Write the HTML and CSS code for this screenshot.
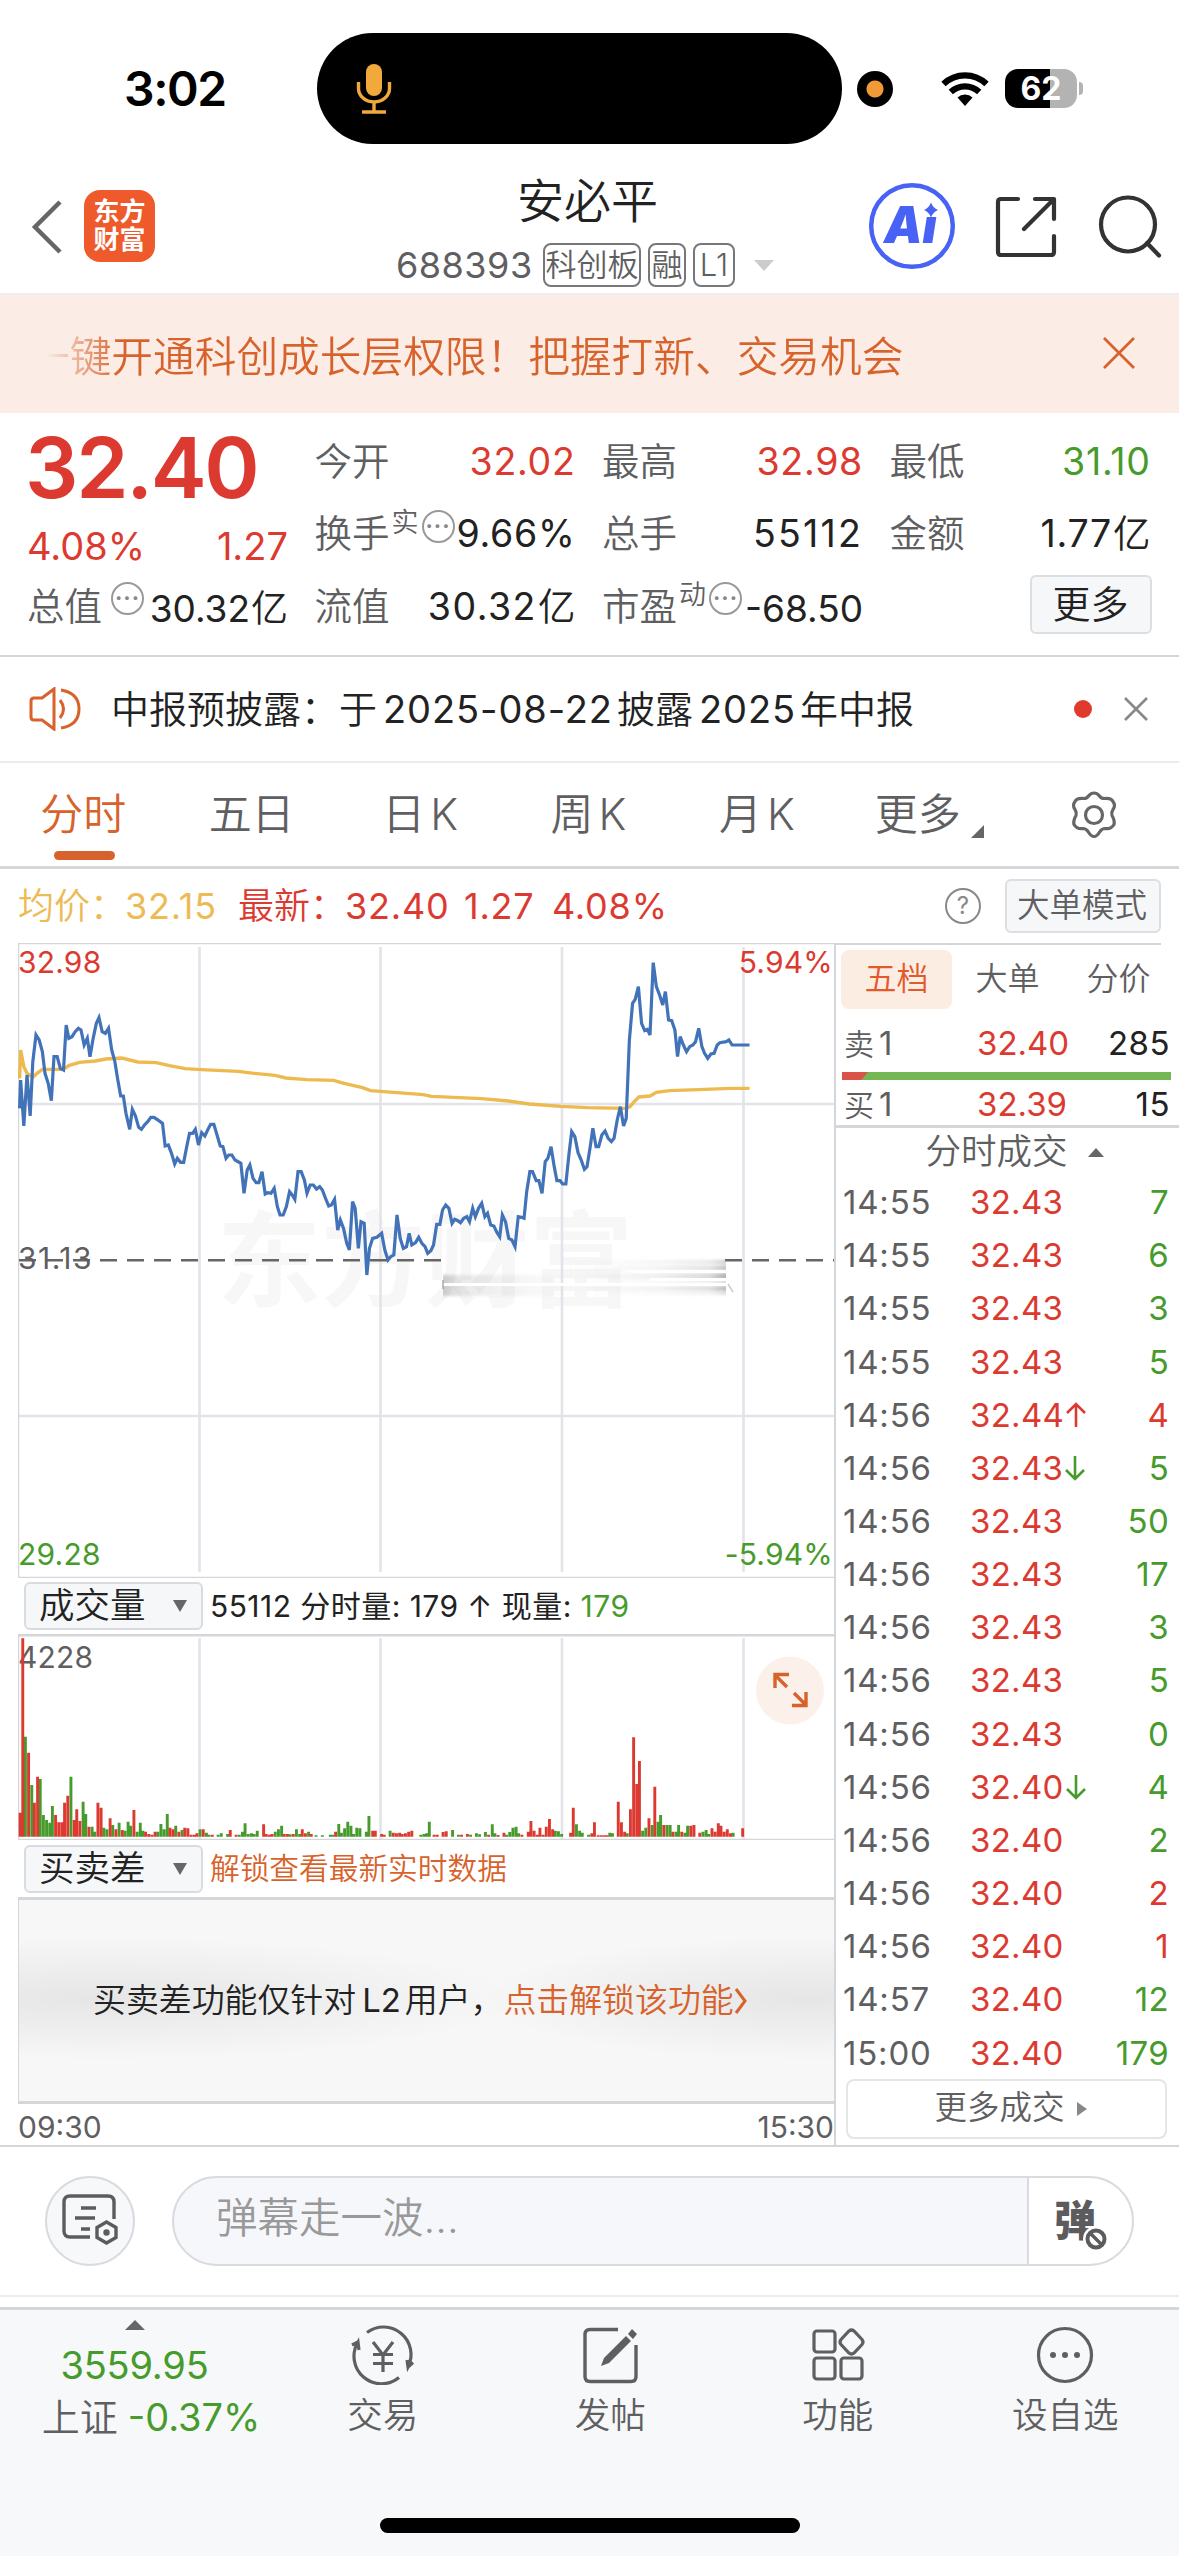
FILE: index.html
```html
<!DOCTYPE html>
<html lang="zh-CN">
<head>
<meta charset="utf-8">
<title>安必平 688393</title>
<link rel="stylesheet" href="styles.css">
</head>
<body>
<div class="status">
  <div class="clock">3:02</div>
  <div class="island">
    <svg width="36" height="52" viewBox="0 0 36 52"><rect x="10" y="1" width="16" height="32" rx="8" fill="#f2a93b"/><path d="M2.500 19v6.500a15.500 13.500 0 0 0 31 0V19M18 39v9M6 49h24" fill="none" stroke="#f2a93b" stroke-width="3.400"/></svg>
  </div>
  <div class="rec"></div>
  <svg class="wifi" width="50" height="36" viewBox="0 0 50 36"><path d="M25 35l-7.500-8.500a11 11 0 0 1 15 0z" fill="#000"/><path d="M3.500 13a31 31 0 0 1 43 0M10.800 21a20.500 20.500 0 0 1 28.400 0" fill="none" stroke="#000" stroke-width="6.200"/></svg>
  <div class="battery">62</div><div class="battery-cap"></div>
</div>

<header class="head">
  <svg class="back" width="32" height="54" viewBox="0 0 32 54"><path d="M29 2L4 27l25 25" fill="none" stroke="#666" stroke-width="4.500"/></svg>
  <div class="logo"><span>东方</span><span>财富</span></div>
  <div class="title">
    <h1>安必平</h1>
    <div class="code-row"><span class="code">688393</span><span class="tag t3">科创板</span><span class="tag t1">融</span><span class="tag tl">L1</span><i class="tri-down light"></i></div>
  </div>
  <svg class="ai" width="88" height="88" viewBox="0 0 88 88"><circle cx="44" cy="44" r="40.800" fill="#fff" stroke="#4762f5" stroke-width="4.500"/><text x="16" y="61" class="ai-text" textLength="53" lengthAdjust="spacingAndGlyphs">Ai</text><path d="M51 18h20v17H51z" fill="#fff"/><path d="M63 20.500q2 5.500 7 7.500-5 2-7 7.500-2-5.500-7-7.500 5-2 7-7.500z" fill="#4762f5"/></svg>
  <svg class="share" width="62" height="62" viewBox="0 0 62 62"><path d="M23 3H6Q3 3 3 6v50q0 3 3 3h50q3 0 3-3V40M40 3h19v20M57 5L29 33" fill="none" stroke="#333" stroke-width="4.200" stroke-linecap="round" stroke-linejoin="round"/></svg>
  <svg class="search" width="64" height="64" viewBox="0 0 64 64"><circle cx="30" cy="29.500" r="27" fill="none" stroke="#333" stroke-width="4.200"/><path d="M49 48l12 12.500" stroke="#333" stroke-width="4.200" stroke-linecap="round"/></svg>
</header>

<div class="banner"><p>一键开通科创成长层权限！把握打新、交易机会</p><svg width="32" height="32" viewBox="0 0 32 32"><path d="M1 1l30 30M31 1L1 31" stroke="#d8622b" stroke-width="2.800"/></svg></div>

<section class="quote">
  <div class="last"><div class="price">32.40</div><div class="chg"><span>4.08%</span><span>1.27</span></div></div>
  <div class="cell"><label>今开</label><b class="up">32.02</b></div>
  <div class="cell"><label>最高</label><b class="up">32.98</b></div>
  <div class="cell"><label>最低</label><b class="down">31.10</b></div>
  <div class="cell"><label>换手</label><sup>实</sup><i class="dots">···</i><b>9.66%</b></div>
  <div class="cell"><label>总手</label><b class="wide-num">55112</b></div>
  <div class="cell"><label>金额</label><b>1.77<u>亿</u></b></div>
  <div class="cell low"><label>总值</label><i class="dots wide">···</i><b>30.32<u>亿</u></b></div>
  <div class="cell"><label>流值</label><b class="roomy">30.32<u>亿</u></b></div>
  <div class="cell low"><label>市盈</label><sup>动</sup><i class="dots">···</i><b>-68.50</b></div>
  <div class="cell"><span class="more">更多</span></div>
</section>

<section class="notice">
  <svg width="54" height="44" viewBox="0 0 54 44"><g fill="none" stroke="#d8622b" stroke-width="3"><path d="M25 2L13 11H5q-3 0-3 3v16q0 3 3 3h8l12 9z"/><path d="M31 13q7 9 0 18"/><path d="M32 3q18 3 18 19T32 41"/></g></svg>
  <p>中报预披露：于<span class="n">2025-08-22</span>披露<span class="n">2025</span>年中报</p>
  <i class="dot"></i>
  <svg width="24" height="24" viewBox="0 0 24 24"><path d="M1 1l22 22M23 1L1 23" stroke="#888" stroke-width="2.600"/></svg>
</section>

<nav class="tabs">
  <span class="on">分时</span><span>五日</span><span>日<em>K</em></span><span>周<em>K</em></span><span>月<em>K</em></span><span class="mt">更多<i class="corner"></i></span>
  <span><svg width="50" height="48" viewBox="0 0 50 48"><g fill="none" stroke="#666" stroke-width="3.200" stroke-linejoin="round"><path d="M25 2q3 0 5 2.500 2 3 5 3 7-1 9 3 3 4 0 8-2 3-1 6 3 5 2 9-3 5-9 4-3 0-5 3-3 5-6 5t-6-5q-2-3-5-3-6 1-9-4-1-4 2-9 1-3-1-6-3-4 0-8 2-4 9-3 3 0 5-3Q22 2 25 2z"/><circle cx="25" cy="24" r="8.500"/></g></svg></span>
</nav>

<div class="info">
  <span class="avg">均价：</span><span class="avg v1">32.15</span><span class="up l2">最新：</span><span class="up v2">32.40</span><span class="up v3">1.27</span><span class="up v4">4.08%</span>
  <span class="help">?</span><span class="mode">大单模式</span>
</div>

<main class="main">
  <div class="left">
    <svg class="chart" width="816" height="635" viewBox="18 943 816 635">
      <defs>
        <linearGradient id="right-haze" x1="0" x2="1"><stop offset="0" stop-color="#aaa" stop-opacity="0"/><stop offset=".6" stop-color="#aaa" stop-opacity=".14"/><stop offset=".9" stop-color="#aaa" stop-opacity=".35"/><stop offset="1" stop-color="#999" stop-opacity=".7"/></linearGradient>
        <linearGradient id="left-haze" x1="0" x2="1"><stop offset="0" stop-color="#888" stop-opacity=".4"/><stop offset=".15" stop-color="#888" stop-opacity=".18"/><stop offset="1" stop-color="#888" stop-opacity="0"/></linearGradient>
        <filter id="soft" x="-5%" y="-30%" width="110%" height="160%"><feGaussianBlur stdDeviation="0 1.500"/></filter>
      </defs>
      <text x="217" y="1299" class="watermark">东方财富</text>
      <path class="grid" d="M199.500 947v625M380.500 947v625M562 947v625M743.500 947v625M19 1104h815M19 1416h815"/>
      <path class="frame" d="M18 943.500H834M18 1577.500H834M18.500 943V1578"/>
      <path d="M19 1260.300H442M725 1260.300H834" stroke="#666" stroke-width="2.600" stroke-dasharray="17 10"/>
      <g filter="url(#soft)">
        <rect x="443" y="1275" width="130" height="21" fill="url(#left-haze)"/>
        <rect x="560" y="1261" width="166" height="34" fill="url(#right-haze)" opacity=".45"/>
        <path d="M560 1260.500h166v1.500h-166zM560 1274h166v5h-166zM560 1287h166v3h-166zM560 1267h166v2h-166z" fill="url(#right-haze)"/>
      </g>
      <path d="M443 1284.500h286M630 1271.500h101M650 1279.500h80" stroke="#fff" stroke-width="3.200"/>
      <path d="M443 1280v9" stroke="#999" stroke-width="1.200"/>
      <path d="M728 1284l5 8" stroke="#ccc" stroke-width="1.500"/>
      <g transform="translate(0 860) scale(.52934 .33333)" fill="none">
        <polyline class="avg-line" points="37,655 39,570 45,620 51,640 62,652 70,640 80,628 120,628 130,617 150,607 180,603 200,597 230,594 245,600 260,606 295,608 320,617 350,626 380,629 450,634 480,640 520,646 540,654 580,659 630,661 650,670 685,683 700,692 750,698 800,704 815,709 910,716 960,723 1000,732 1060,739 1110,743 1180,745 1190,740 1200,722 1207,711 1228,708 1240,697 1265,692 1320,689 1380,685 1416,685"/>
        <polyline class="price-line" points="37,745 39,660 45,798 51,645 57,768 62,605 68,525 74,540 80,575 85,640 91,670 97,722 102,590 108,590 114,625 120,630 125,495 130,535 136,530 142,515 148,505 153,510 159,555 165,535 170,590 176,535 182,490 187,473 193,515 199,520 205,505 211,570 217,605 222,655 228,708 233,708 238,760 245,808 250,748 256,768 262,802 267,808 273,795 279,785 285,772 291,772 300,782 307,790 312,858 318,855 324,880 330,912 335,895 341,907 347,907 353,858 358,820 364,820 369,808 375,855 381,818 387,828 393,808 398,793 404,793 410,825 416,858 421,860 427,895 432,885 438,885 444,900 455,910 461,1000 467,930 472,915 478,955 484,968 489,968 495,935 501,1002 506,998 512,1000 518,985 524,1040 529,1065 535,1065 541,1040 547,995 552,1005 557,1018 563,935 569,935 575,960 580,1000 586,975 592,975 598,987 604,980 609,990 615,1015 621,1038 626,1035 632,1018 638,1110 643,1080 649,1105 655,1150 660,1170 666,1025 671,1045 677,1165 682,1085 688,1090 693,1245 698,1165 704,1135 712,1132 721,1120 727,1170 733,1200 738,1190 744,1185 750,1065 756,1135 762,1165 768,1160 773,1120 778,1155 785,1148 791,1132 797,1150 803,1160 808,1180 814,1172 819,1155 825,1093 831,1093 836,1050 842,1035 848,1045 854,1090 859,1078 865,1082 870,1088 876,1075 882,1070 887,1085 893,1045 898,1070 904,1045 910,1030 916,1070 921,1060 927,1095 933,1098 939,1118 944,1130 949,1065 955,1085 961,1135 967,1140 973,1160 979,1070 985,1072 990,1075 995,995 1001,935 1006,935 1013,962 1018,962 1024,1000 1030,905 1035,895 1041,860 1047,920 1052,962 1058,962 1063,972 1069,972 1075,880 1080,815 1086,830 1092,878 1098,900 1104,928 1109,920 1115,860 1120,805 1126,860 1131,860 1137,825 1143,813 1149,835 1155,845 1160,835 1166,780 1172,740 1178,798 1183,775 1189,540 1195,430 1200,418 1206,380 1212,490 1218,512 1223,508 1228,525 1234,308 1240,380 1246,405 1252,435 1257,395 1263,480 1269,482 1275,510 1280,590 1285,530 1291,555 1297,575 1303,560 1309,555 1314,545 1320,505 1326,560 1331,580 1337,595 1343,582 1349,580 1355,555 1360,548 1372,545 1377,540 1383,555 1416,555"/>
      </g>
      <g class="axis">
        <text x="18" y="973" class="t-up">32.98</text><text x="833" y="973" class="t-up" text-anchor="end">5.94%</text>
        <text x="18" y="1269" class="t-mid">31.13</text>
        <text x="18" y="1565" class="t-down">29.28</text><text x="833" y="1565" class="t-down" text-anchor="end">-5.94%</text>
      </g>
    </svg>
    <div class="ind"><span class="select">成交量<i class="tri-down"></i></span><span class="ind-text">55112 分时量: 179 ↑ 现量: <span class="down">179</span></span></div>
    <svg class="volume" width="816" height="206" viewBox="18 1634 816 206">
      <path class="grid" d="M199.500 1638v201M380.500 1638v201M562 1638v201M743.500 1638v201"/>
      <path class="frame" d="M18 1839.500H834M18.500 1635V1840"/><path d="M18 1635.300H834" stroke="#d5d6d9" stroke-width="2.600"/>
      <text x="18" y="1668" class="vol-label">4228</text>
      <g transform="translate(0 1560) scale(.52934 .33333)" fill="none" stroke-width="5.500">
        <path stroke="#469b2c" d="M48 830V530M60 830V675M76 830V657M82 830V765M88 830V780M94 830V788M99 830V738M134 830V650M157 830V725M162 830V762M174 830V800M179 830V815M196 830V803M202 830V808M213 830V795M225 830V788M236 830V812M242 830V785M247 830V797M259 830V815M265 830V788M270 830V812M298 830V815M304 830V792M310 830V808M316 830V762M332 830V797M344 830V810M378 830V808M390 830V818M395 830V824M412 830V824M418 830V820M430 830V822M452 830V824M458 830V815M463 830V790M469 830V822M475 830V820M480 830V822M486 830V812M520 830V815M526 830V808M532 830V797M548 830V823M560 830V808M566 830V822M583 830V815M597 830V826M609 830V826M624 830V824M629 830V824M640 830V792M645 830V818M651 830V805M657 830V785M663 830V797M668 830V822M674 830V803M680 830V805M692 830V815M697 830V768M737 830V812M795 830V824M801 830V822M806 830V820M811 830V785M855 830V810M866 830V824M889 830V824M900 830V820M906 830V823M917 830V816M930 830V793M935 830V820M957 830V824M963 830V816M969 830V803M975 830V800M980 830V820M1049 830V812M1055 830V814M1061 830V822M1089 830V793M1095 830V812M1100 830V818M1112 830V824M1152 830V818M1157 830V820M1185 830V820M1214 830V812M1220 830V803M1232 830V795M1243 830V785M1248 830V765M1260 830V795M1266 830V795M1277 830V815M1282 830V795M1294 830V818M1299 830V797M1328 830V815M1334 830V810M1339 830V822M1385 830V818"/>
        <path stroke="#dc3a30" d="M38 830V758M43 830V235M54 830V578M65 830V728M71 830V650M105 830V765M111 830V787M117 830V787M122 830V728M128 830V707M140 830V780M145 830V748M151 830V783M168 830V800M185 830V728M191 830V743M208 830V775M219 830V808M231 830V810M253 830V750M275 830V815M281 830V822M287 830V824M293 830V815M321 830V803M327 830V808M338 830V815M349 830V803M355 830V805M361 830V824M367 830V824M372 830V820M384 830V808M401 830V824M435 830V810M446 830V824M498 830V793M503 830V822M509 830V824M514 830V822M537 830V822M543 830V822M554 830V822M571 830V808M577 830V820M588 830V822M634 830V815M704 830V812M709 830V812M721 830V822M726 830V824M743 830V818M749 830V820M755 830V818M760 830V822M766 830V820M772 830V815M778 830V812M820 830V824M826 830V824M837 830V816M843 830V814M872 830V824M883 830V822M923 830V824M941 830V825M952 830V818M986 830V824M998 830V815M1003 830V783M1009 830V812M1015 830V824M1020 830V803M1026 830V824M1032 830V800M1038 830V777M1044 830V808M1078 830V818M1083 830V743M1118 830V820M1123 830V787M1130 830V826M1136 830V826M1142 830V826M1147 830V826M1168 830V725M1174 830V787M1180 830V815M1191 830V748M1197 830V532M1203 830V672M1208 830V603M1226 830V775M1237 830V680M1254 830V795M1271 830V815M1288 830V815M1305 830V797M1311 830V795M1322 830V818M1345 830V805M1351 830V815M1357 830V790M1362 830V797M1368 830V815M1374 830V808M1380 830V820M1403 830V805"/>
      </g>
      <circle cx="790" cy="1690.500" r="34" fill="#fcf1ea"/>
      <path d="M775 1688v-13.500h14M775 1675l12 12M806 1692v13.500h-14M806 1705l-12-12" fill="none" stroke="#d8622b" stroke-width="3.400"/>
    </svg>
    <div class="ind two"><span class="select">买卖差<i class="tri-down"></i></span><span class="ind-text hot">解锁查看最新实时数据</span></div>
    <div class="locked"><p>买卖差功能仅针对<span class="l2x">L2</span>用户，<a>点击解锁该功能</a></p><svg width="14" height="26" viewBox="0 0 14 26"><path d="M2 1l9 12-9 12" fill="none" stroke="#d8622b" stroke-width="3"/></svg></div>
    <div class="times"><span>09:30</span><span>15:30</span></div>
  </div>

  <aside class="book">
    <div class="book-tabs"><span class="on">五档</span><span>大单</span><span>分价</span></div>
    <div class="lvl"><span>卖<em>1</em></span><span class="up">32.40</span><span class="q">285</span></div>
    <div class="ratio"><i></i></div>
    <div class="lvl buy"><span>买<em>1</em></span><span class="up">32.39</span><span class="q">15</span></div>
    <div class="deal-title">分时成交<i class="tri-up"></i></div>
    <div class="deals">
      <div><span>14:55</span><span class="up">32.43</span><span class="down">7</span></div>
      <div><span>14:55</span><span class="up">32.43</span><span class="down">6</span></div>
      <div><span>14:55</span><span class="up">32.43</span><span class="down">3</span></div>
      <div><span>14:55</span><span class="up">32.43</span><span class="down">5</span></div>
      <div><span>14:56</span><span class="up">32.44<svg width="22" height="26" viewBox="0 0 22 26"><path d="M11 25V2M2 11l9-9 9 9" fill="none" stroke="#dc3a30" stroke-width="2.600"/></svg></span><span class="up">4</span></div>
      <div><span>14:56</span><span class="up">32.43<svg width="22" height="26" viewBox="0 0 22 26"><path d="M11 1v23M2 15l9 9 9-9" fill="none" stroke="#469b2c" stroke-width="2.600"/></svg></span><span class="down">5</span></div>
      <div><span>14:56</span><span class="up">32.43</span><span class="down">50</span></div>
      <div><span>14:56</span><span class="up">32.43</span><span class="down">17</span></div>
      <div><span>14:56</span><span class="up">32.43</span><span class="down">3</span></div>
      <div><span>14:56</span><span class="up">32.43</span><span class="down">5</span></div>
      <div><span>14:56</span><span class="up">32.43</span><span class="down">0</span></div>
      <div><span>14:56</span><span class="up">32.40<svg width="22" height="26" viewBox="0 0 22 26"><path d="M11 1v23M2 15l9 9 9-9" fill="none" stroke="#469b2c" stroke-width="2.600"/></svg></span><span class="down">4</span></div>
      <div><span>14:56</span><span class="up">32.40</span><span class="down">2</span></div>
      <div><span>14:56</span><span class="up">32.40</span><span class="up">2</span></div>
      <div><span>14:56</span><span class="up">32.40</span><span class="up">1</span></div>
      <div><span>14:57</span><span class="up">32.40</span><span class="down">12</span></div>
      <div><span>15:00</span><span class="up">32.40</span><span class="down">179</span></div>
    </div>
    <div class="deal-more">更多成交<i class="tri-right"></i></div>
  </aside>
</main>

<div class="comment">
  <div class="round"><svg width="60" height="56" viewBox="0 0 60 56"><g fill="none" stroke="#5c5c5f" stroke-width="3.400"><path d="M30 44H10q-6 0-6-6V9q0-6 6-6h38q6 0 6 6v17"/><path d="M21 15h15M15 25h20M21 36h9"/><path d="M46.500 29l9.500 5.500v10l-9.500 5.500-9.500-5.500v-10z"/></g><circle cx="46.500" cy="39.500" r="3.200" fill="#5c5c5f"/></svg></div>
  <div class="pill"><span class="ph">弹幕走一波...</span><span class="dm">弹<svg width="26" height="26" viewBox="0 0 26 26"><circle cx="13" cy="13" r="13" fill="#fff"/><circle cx="13" cy="13" r="8.500" fill="none" stroke="#5c5c5f" stroke-width="4"/><path d="M7 7l12 12" stroke="#5c5c5f" stroke-width="3.400"/></svg></span></div>
</div>

<footer class="nav">
  <div class="index"><i class="tri-up"></i><span class="down">3559.95</span><span class="ix">上证<b class="down">-0.37%</b></span></div>
  <div class="item"><svg width="66" height="60" viewBox="0 0 66 60"><g fill="none" stroke="#5f5f62" stroke-width="3.200"><path d="M17 7.500A27.500 27.500 0 0 1 58 42l-1-7M58 42l5-4.500"/><path d="M49 52.500A27.500 27.500 0 0 1 8 17l1 8M8 17l-6 3"/><path d="M23 17l10 13 10-13M33 30v17M23 29.500h20M23 38.500h20"/></g></svg>交易</div>
  <div class="item"><svg width="60" height="60" viewBox="0 0 60 60"><g fill="none" stroke="#5f5f62" stroke-width="3.400"><path d="M38 4.500H10q-5 0-5 5v42q0 5 5 5h41q5 0 5-5V20"/></g><path d="M21 41l3-8L46 11l5 5-22 22zM48 9l4-5 5 5-4 5z" fill="#5f5f62"/></svg>发帖</div>
  <div class="item"><svg width="60" height="60" viewBox="0 0 60 60"><g fill="none" stroke="#5f5f62" stroke-width="3.200"><rect x="6" y="6" width="21" height="21" rx="3"/><rect x="6" y="33" width="21" height="21" rx="3"/><rect x="33" y="33" width="21" height="21" rx="3"/><path d="M41 6q2.500-2 5 0l8 8.500q2 2.500 0 5l-8 8.500q-2.500 2-5 0l-8-8.500q-2-2.500 0-5z"/></g></svg>功能</div>
  <div class="item"><svg width="60" height="60" viewBox="0 0 60 60"><circle cx="30" cy="30" r="26.500" fill="none" stroke="#5f5f62" stroke-width="3.200"/><g fill="#5f5f62"><circle cx="18" cy="30" r="3"/><circle cx="30" cy="30" r="3"/><circle cx="42" cy="30" r="3"/></g></svg>设自选</div>
  <div class="home"></div>
</footer>
</body>
</html>
```
FILE: styles.css
```css
* { box-sizing: border-box; }
body {
  margin: 0; width: 1179px; height: 2556px; overflow: hidden; background: #fff;
  font-family: Inter, "Noto Sans CJK SC", sans-serif; font-weight: 350; line-height: 1; color: #222;
  display: flex; flex-direction: column;
}
body > * { flex: none; }
svg { display: block; flex: none; }
i, em { font-style: normal; }
u { text-decoration: none; font-weight: 350; margin-left: 1px; letter-spacing: 0; }
b { font-weight: 400; }
p, h1 { margin: 0; font-weight: 350; }
.up { color: #dc3a30; }
.down { color: #469b2c; }

/* status bar */
.status { height: 159px; display: flex; align-items: center; padding-top: 18px; }
.clock { width: 193px; margin-left: 124px; font-size: 48px; font-weight: 600; letter-spacing: -1.4px; color: #000; }
.island { width: 525px; height: 111px; border-radius: 56px; background: #000; display: flex; align-items: center; padding-left: 39px; }
.rec { width: 36px; height: 36px; border-radius: 50%; margin-left: 15px; background: radial-gradient(circle, #f29a38 8px, #000 9px); }
.wifi { margin-left: 47px; }
.battery { margin-left: 15px; width: 72px; height: 39px; border-radius: 13px; background: linear-gradient(90deg, #000 62%, #b3b3b3 62%); color: #fff; font-size: 32px; font-weight: 700; line-height: 39px; text-align: center; }
.battery-cap { width: 4px; height: 13px; margin-left: 2px; background: #b3b3b3; border-radius: 0 5px 5px 0; }

/* header */
.head { height: 134px; display: flex; padding-left: 31px; }
.back { margin-top: 41px; }
.logo { margin: 31px 0 0 21px; width: 71px; height: 72px; border-radius: 16px; background: #ee5a2b; color: #fff; font-size: 26px; font-weight: 700; line-height: 28.500px; display: flex; flex-direction: column; align-items: center; justify-content: center; }
.title { margin-left: 241px; width: 452px; display: flex; flex-direction: column; }
.title h1 { margin: 18px 0 0 121px; font-size: 47px; }
.code-row { margin-top: 19px; display: flex; align-items: center; height: 44px; color: #5f5f62; }
.code { width: 147px; font-size: 36px; font-weight: 400; letter-spacing: .5px; }
.tag { height: 44px; border: 2px solid #77777a; border-radius: 8px; font-size: 31px; line-height: 40px; text-align: center; margin-right: 7px; white-space: nowrap; }
.t3 { width: 98px; } .t1 { width: 38px; } .tl { width: 42px; }
.ai { margin: 23px 0 0 20px; }
.ai-text { font-size: 51px; font-weight: 900; font-style: italic; fill: #4762f5; }
.share { margin: 37px 0 0 39px; }
.search { margin: 36px 0 0 41px; }

/* triangles */
.tri-down { width: 0; height: 0; border: 7px solid transparent; border-top: 12px solid #666; border-bottom: 0; }
.tri-down.light { border-width: 11px 10.5px 0; border-top-color: #ccc; margin-left: 12px; }
.tri-up { width: 0; height: 0; border: 8px solid transparent; border-bottom: 9px solid #666; border-top: 0; }
.tri-right { width: 0; height: 0; border: 7px solid transparent; border-left: 10px solid #888; border-right: 0; }

/* promo banner */
.banner { height: 120px; background: #fbede5; border-top: 2px solid #ededee; display: flex; align-items: center; justify-content: space-between; padding: 0 44px 0 28px; }
.banner svg { margin-top: -2px; }
.banner p { padding-top: 6px; font-size: 41.7px; background: linear-gradient(90deg, rgba(216,98,43,0) 18px, #d8622b 92px); -webkit-background-clip: text; background-clip: text; color: transparent; line-height: 60px; white-space: nowrap; }

/* quote grid */
.quote { height: 244px; border-bottom: 2px solid #d5d6d9; padding: 13px 0 0 27px; display: grid; grid-template-columns: repeat(4, 261px); column-gap: 26.500px; grid-template-rows: 72px 72px 74px; }
.last { grid-row: span 2; color: #dc3a30; }
.price { font-size: 84px; font-weight: 600; letter-spacing: -2.300px; margin-left: -2px; }
.chg { margin-top: 17px; display: flex; justify-content: space-between; font-size: 38px; font-weight: 400; }
.cell { display: flex; align-items: center; color: #5f5f62; font-size: 37.500px; white-space: nowrap; }
.cell b { margin-left: auto; color: #222; letter-spacing: .7px; }
.cell .wide-num { letter-spacing: 2.200px; }
.cell .roomy { letter-spacing: 1.500px; }
.cell b.up { color: #dc3a30; }
.cell b.down { color: #469b2c; }
.cell.low b { padding-top: 3px; letter-spacing: 0; font-size: 37px; }
.cell sup { font-size: 27px; align-self: flex-start; margin: 11px 0 0 2px; line-height: 1; }
.dots { width: 33px; height: 33px; flex: none; border: 2.500px solid #999; border-radius: 50%; color: #888; font-size: 22px; font-weight: 700; line-height: 28px; text-align: center; letter-spacing: 1px; align-self: flex-start; margin: 12px 0 0 3px; }
.dots.wide { margin-left: 9px; }
.more { margin-left: auto; margin-right: -1px; width: 122px; height: 59px; border: 2px solid #dcdee2; border-radius: 6px; background: #f6f7f9; color: #222; font-size: 38px; line-height: 54px; text-align: center; margin-top: -6px; }

/* notice */
.notice { height: 106px; border-bottom: 2px solid #ececee; display: flex; align-items: center; padding: 0 31px 0 29px; }
.notice p { font-size: 38px; margin-left: 28px; white-space: nowrap; }
.notice .n { margin: 0 4px 0 6px; letter-spacing: .9px; font-weight: 400; }
.dot { width: 18px; height: 18px; border-radius: 50%; background: #e03a2f; margin-left: auto; margin-right: 32px; }

/* tabs */
.tabs { height: 106px; border-bottom: 3px solid #d5d6d9; display: grid; grid-template-columns: repeat(7, 1fr); font-size: 43px; color: #5f5f62; }
.tabs span { display: flex; justify-content: center; align-items: center; position: relative; padding-right: 2px; }
.tabs em { margin-left: 5px; }
.tabs .on { color: #d8622b; }
.tabs .on::after { content: ""; position: absolute; left: 54px; bottom: 6px; width: 61px; height: 9px; border-radius: 5px; background: #d8622b; }
.corner { margin: 33px -18px 0 10px; border-left: 13px solid transparent; border-bottom: 13px solid #666; }
.tabs .mt { padding-right: 12px; }

/* average / latest line */
.info { height: 74px; display: flex; align-items: center; padding: 0 18px; font-size: 36px; white-space: nowrap; }
.avg { color: #ecbb55; }
.info span { flex: none; }
.info > span:first-child, .l2 { width: 107px; }
.v1, .v2, .v3, .v4 { letter-spacing: .8px; font-weight: 400; }
.v1 { width: 113px; } .v2 { width: 119px; } .v3 { width: 88px; }
.help { margin-left: auto; margin-right: 24px; width: 36px; height: 36px; border: 2.500px solid #888; border-radius: 50%; color: #888; font-size: 24px; font-weight: 400; line-height: 32px; text-align: center; }
.mode { width: 156px; height: 54px; border: 2px solid #dcdee2; border-radius: 6px; background: #f6f7f9; color: #5f5f62; font-size: 32.500px; line-height: 50px; text-align: center; padding-right: 2px; }

/* charts */
.main { height: 1204px; display: flex; border-bottom: 2px solid #d5d6d9; }
.left { width: 834px; padding-left: 18px; }
.grid { stroke: #e3e4e9; stroke-width: 2.600; fill: none; }
.frame { stroke: #d5d6d9; stroke-width: 1.500; fill: none; }
.watermark { font-size: 104px; font-weight: 700; fill: #f7f7f8; }
.avg-line { stroke: #edba50; stroke-width: 3.400; vector-effect: non-scaling-stroke; }
.price-line { stroke: #4273b8; stroke-width: 3.200; vector-effect: non-scaling-stroke; }
.axis text, .vol-label { font-size: 30px; font-weight: 400; fill: #5f5f62; letter-spacing: .2px; }
.axis .t-up { fill: #dc3a30; }
.axis .t-mid { letter-spacing: 1.500px; }
.axis .t-down { fill: #469b2c; }
.ind { height: 56px; display: flex; align-items: center; padding-left: 6px; font-size: 30px; white-space: nowrap; }
.select { width: 179px; height: 48px; border: 2px solid #d9dbe0; border-radius: 6px; background: #f6f7f9; display: flex; align-items: center; justify-content: space-between; padding: 0 14px 0 13px; font-size: 35.500px; }
.ind-text { margin-left: 7px; letter-spacing: .45px; font-weight: 400; }
.ind.two { height: 57px; }
.hot { letter-spacing: 0; font-size: 29.700px; font-weight: 350; }
.hot, .locked a { color: #d8622b; }
.locked { height: 207px; border-top: 3px solid #d5d6d9; border-bottom: 3px solid #d5d6d9; border-left: 1px solid #d5d6d9; padding-left: 74px; font-size: 32.900px; display: flex; align-items: center; background: radial-gradient(ellipse 420px 62px at 10% 49%, rgba(0,0,0,.07), transparent), radial-gradient(ellipse 330px 62px at 97% 49%, rgba(0,0,0,.07), transparent), #f7f7f7; }
.l2x { margin: 0 4px 0 6px; font-weight: 400; }
.times { display: flex; justify-content: space-between; padding-top: 8px; font-size: 30px; font-weight: 400; color: #5f5f62; }

/* order book */
.book { width: 345px; border-left: 2px solid #d5d6d9; padding-left: 5px; }
.book-tabs { margin-right: 18px; border-top: 2px solid #d5d6d9; margin-left: -5px; padding: 5px 0 0 5px; display: flex; height: 67px; font-size: 32px; color: #5f5f62; }
.book-tabs span { flex: none; width: 111px; height: 59px; line-height: 58px; text-align: center; }
.book-tabs .on { background: #fcede3; color: #e4592b; border-radius: 8px; }
.lvl { height: 62px; padding-top: 4px; display: grid; grid-template-columns: 133px 100px 1fr; align-items: center; font-size: 33px; font-weight: 400; padding-right: 10px; padding-left: 3px; color: #5f5f62; }
.lvl span:first-child { font-size: 30px; font-weight: 350; }
.lvl em { font-size: 33px; margin-left: 5px; font-weight: 400; }
.lvl .up { color: #dc3a30; }
.lvl .q { text-align: right; color: #222; letter-spacing: .5px; margin-right: -1px; }
.ratio { height: 8px; margin: 0 8px 0 1px; background: #73b854; }
.ratio i { display: block; width: 26px; height: 8px; background: #d9534b; clip-path: polygon(0 0, 100% 0, 75% 100%, 0 100%); }
.lvl.buy { height: 45px; padding-top: 3px; }
.deal-title { margin-left: -5px; border-top: 3px solid #d5d6d9; height: 51px; display: flex; align-items: center; justify-content: center; font-size: 35.500px; gap: 20px; color: #5f5f62; padding-left: 8px; padding-right: 3px; padding-left: 17px; }
.deals { padding-left: 2px; padding-right: 10px; font-weight: 400; }
.deals > div { height: 53.160px; display: grid; grid-template-columns: 127px 120px 1fr; align-items: center; font-size: 33px; color: #5f5f62; }
.deals span { display: flex; align-items: center; gap: 1px; letter-spacing: .3px; }
.deals span:first-child { letter-spacing: .8px; }
.deals .up { color: #dc3a30; }
.deals .down { color: #469b2c; }
.deals span:last-child { justify-content: flex-end; }
.deal-more { margin: -1px 12px 0 5px; height: 60px; border: 2px solid #e4e5e7; border-radius: 8px; display: flex; align-items: center; justify-content: center; gap: 12px; font-size: 32.500px; color: #5f5f62; padding-left: 8px; }

/* comment bar */
.comment { height: 150px; border-bottom: 2px solid #ececee; display: flex; align-items: center; padding-left: 45px; gap: 37px; }
.round { width: 90px; height: 90px; border: 2px solid #d9dbe0; border-radius: 50%; background: #f7f8fa; display: flex; align-items: center; justify-content: center; }
.pill { width: 962px; height: 90px; border: 2px solid #d9dbe0; border-radius: 45px; background: linear-gradient(90deg, #f6f7fa 853px, #d9dbe0 853px, #d9dbe0 855px, #fff 855px); display: flex; align-items: center; padding-left: 42px; }
.ph { width: 838px; font-size: 41.500px; color: #999; padding-bottom: 5px; }
.dm { position: relative; font-size: 42px; font-weight: 900; color: #5c5c5f; }
.dm svg { position: absolute; left: 29px; top: 26px; }

/* bottom navigation */
.nav { margin-top: 10px; height: 249px; border-top: 3px solid #d5d6d9; background: #f7f8fa; display: grid; grid-template-columns: 269px repeat(4, 227.500px); position: relative; color: #5f5f62; }
.index { padding: 10px 0 0 0; display: flex; flex-direction: column; align-items: center; font-size: 38px; font-weight: 400; }
.index .tri-up { border-width: 0 10px 10px; }
.index > .down { margin-top: 16px; letter-spacing: -.2px; }
.ix { margin: 14px 0 0 33px; font-size: 38px; font-weight: 350; }
.ix b { margin-left: 10px; }
.item { padding-top: 15px; display: flex; flex-direction: column; align-items: center; font-size: 35.500px; gap: 13px; }
.home { position: absolute; left: 380px; bottom: 23px; width: 420px; height: 15px; border-radius: 8px; background: #000; }
```
